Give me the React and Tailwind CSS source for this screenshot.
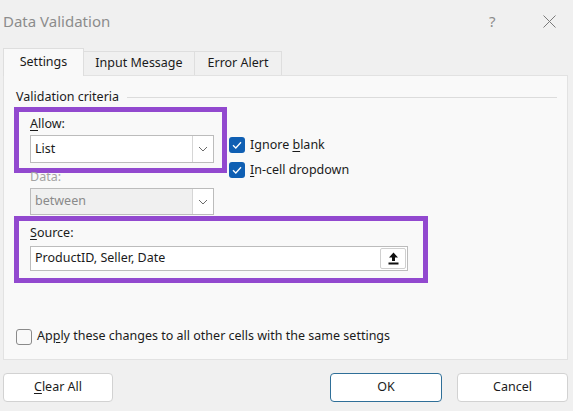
import React from 'react';

const font = "font-['Noto_Sans',sans-serif]";

const Chevron = () => (
  <svg width="10" height="6" viewBox="0 0 10 6" fill="none">
    <path d="M1 1 L5 5 L9 1" stroke="#6b6b6b" strokeWidth="1" />
  </svg>
);

const Select = ({ value, disabled, height }) => (
  <div
    className={`flex w-[184px] border border-[#bcbcbc] ${height} ${disabled ? 'bg-[#f0f0f0]' : 'bg-white'}`}
  >
    <div className={`flex-1 flex items-center pl-[4px] ${disabled ? 'text-[#8a8a8a]' : 'text-[#1b1b1b]'}`}>
      {value}
    </div>
    <div className="w-[21px] flex items-center justify-center bg-white border-l border-[#d6d6d6]">
      <Chevron />
    </div>
  </div>
);

const Checked = () => (
  <div className="w-[16px] h-[16px] rounded-[3px] bg-[#0f5fb3] flex items-center justify-center">
    <svg width="10" height="8" viewBox="0 0 10 8" fill="none">
      <path d="M1 4.2 L3.8 7 L9 1.2" stroke="white" strokeWidth="1.3" />
    </svg>
  </div>
);

const U = ({ children }) => <span className="underline underline-offset-2">{children}</span>;

const Button = ({ children, primary }) => (
  <button
    className={`h-[29px] rounded-[4px] bg-white text-[12.5px] text-[#1b1b1b] ${primary ? 'w-[112px] border border-[#2f6f98]' : 'w-[111px] border border-[#d2d2d2]'}`}
  >
    {children}
  </button>
);

export default function App() {
  return (
    <div className={`w-[573px] h-[411px] bg-[#f0f0f0] flex flex-col ${font} text-[#1b1b1b] text-[12.5px]`}>
      {/* Title bar */}
      <div className="h-[48px] flex pt-[9px] pl-[3px] pr-[17px]">
        <div className="flex-1 text-[15px] leading-[24px] text-[#8c8c8c]">Data Validation</div>
        <div className="w-[14px] text-[15px] leading-[24px] text-[#8c8c8c]">?</div>
        <div className="ml-[40px] mt-[6px]">
          <svg width="13" height="13" viewBox="0 0 13 13">
            <path d="M0.5 0.5 L12.5 12.5 M12.5 0.5 L0.5 12.5" stroke="#7a7a7a" strokeWidth="1" />
          </svg>
        </div>
      </div>

      {/* Tabs */}
      <div className="h-[27px] flex items-end pl-[3px]">
        <div className="relative z-10 -mb-px w-[81px] h-[28px] bg-[#f9f9f9] border border-b-0 border-[#dedede] flex items-center justify-center">
          Settings
        </div>
        <div className="w-[111px] h-[24px] bg-[#f0f0f0] border border-l-0 border-b-0 border-[#dedede] flex items-center justify-center">
          Input Message
        </div>
        <div className="w-[87px] h-[24px] bg-[#f0f0f0] border border-l-0 border-b-0 border-[#dedede] flex items-center justify-center">
          Error Alert
        </div>
      </div>

      {/* Panel */}
      <div className="mx-[3px] w-[565px] h-[285px] bg-[#f9f9f9] border border-[#e2e2e2] flex flex-col">
        <div className="mt-[12px] pl-[12px] pr-[10px] flex items-center h-[18px]">
          <span>Validation criteria</span>
          <div className="flex-1 h-px bg-[#dcdcdc] ml-[8px]" />
        </div>

        <div className="flex h-[66px] mt-[1px] ml-[10px]">
          <div className="w-[213px] h-[66px] border-[5px] border-[#9249cf] pl-[11px] pt-[3px]">
            <div className="h-[18px] leading-[18px]">
              <U>A</U>llow:
            </div>
            <div className="mt-[2px]">
              <Select value="List" height="h-[28px]" />
            </div>
          </div>
          <div className="ml-[2px] pt-[30px] h-[66px] flex flex-col gap-[9px]">
            <div className="flex items-center gap-[5px] h-[16px]">
              <Checked />
              <span>Ignore <U>b</U>lank</span>
            </div>
            <div className="flex items-center gap-[5px] h-[16px]">
              <Checked />
              <span><U>I</U>n-cell dropdown</span>
            </div>
          </div>
        </div>

        <div className="ml-[26px] h-[15px] leading-[8px] text-[#a3a3a3]">Data:</div>
        <div className="ml-[26px]">
          <Select value="between" disabled height="h-[27px]" />
        </div>

        <div className="ml-[10px] mt-px w-[414px] h-[67px] border-[5px] border-[#9249cf] pl-[11px] pt-[3px]">
          <div className="h-[18px] leading-[18px]">
            <U>S</U>ource:
          </div>
          <div className="mt-[4px] w-[378px] h-[25px] bg-white border border-[#bcbcbc] flex">
            <div className="flex-1 flex items-center pl-[4px]">ProductID, Seller, Date</div>
            <div className="w-[26px] m-[1px] border border-[#cfcfcf] rounded-[2px] flex items-center justify-center bg-white">
              <svg width="11" height="13" viewBox="0 0 11 13">
                <path d="M5.5 0.5 L10 5.5 L7 5.5 L7 9 L4 9 L4 5.5 L1 5.5 Z" fill="#111" />
                <rect x="0.5" y="10.5" width="10" height="2" fill="#111" />
              </svg>
            </div>
          </div>
        </div>

        <div className="mt-auto mb-[13px] ml-[12px] flex items-center gap-[5px]">
          <div className="w-[16px] h-[16px] rounded-[3px] border border-[#8a8a8a] bg-[#f9f9f9]" />
          <span>Ap<U>p</U>ly these changes to all other cells with the same settings</span>
        </div>
      </div>

      {/* Buttons */}
      <div className="mt-[13px] flex pl-[3px]">
        <div className="w-[110px]">
          <button className="w-[110px] h-[29px] rounded-[4px] bg-white border border-[#d2d2d2] text-[12.5px]">
            <U>C</U>lear All
          </button>
        </div>
        <div className="ml-[217px]">
          <Button primary>OK</Button>
        </div>
        <div className="ml-[15px]">
          <Button>Cancel</Button>
        </div>
      </div>
    </div>
  );
}
